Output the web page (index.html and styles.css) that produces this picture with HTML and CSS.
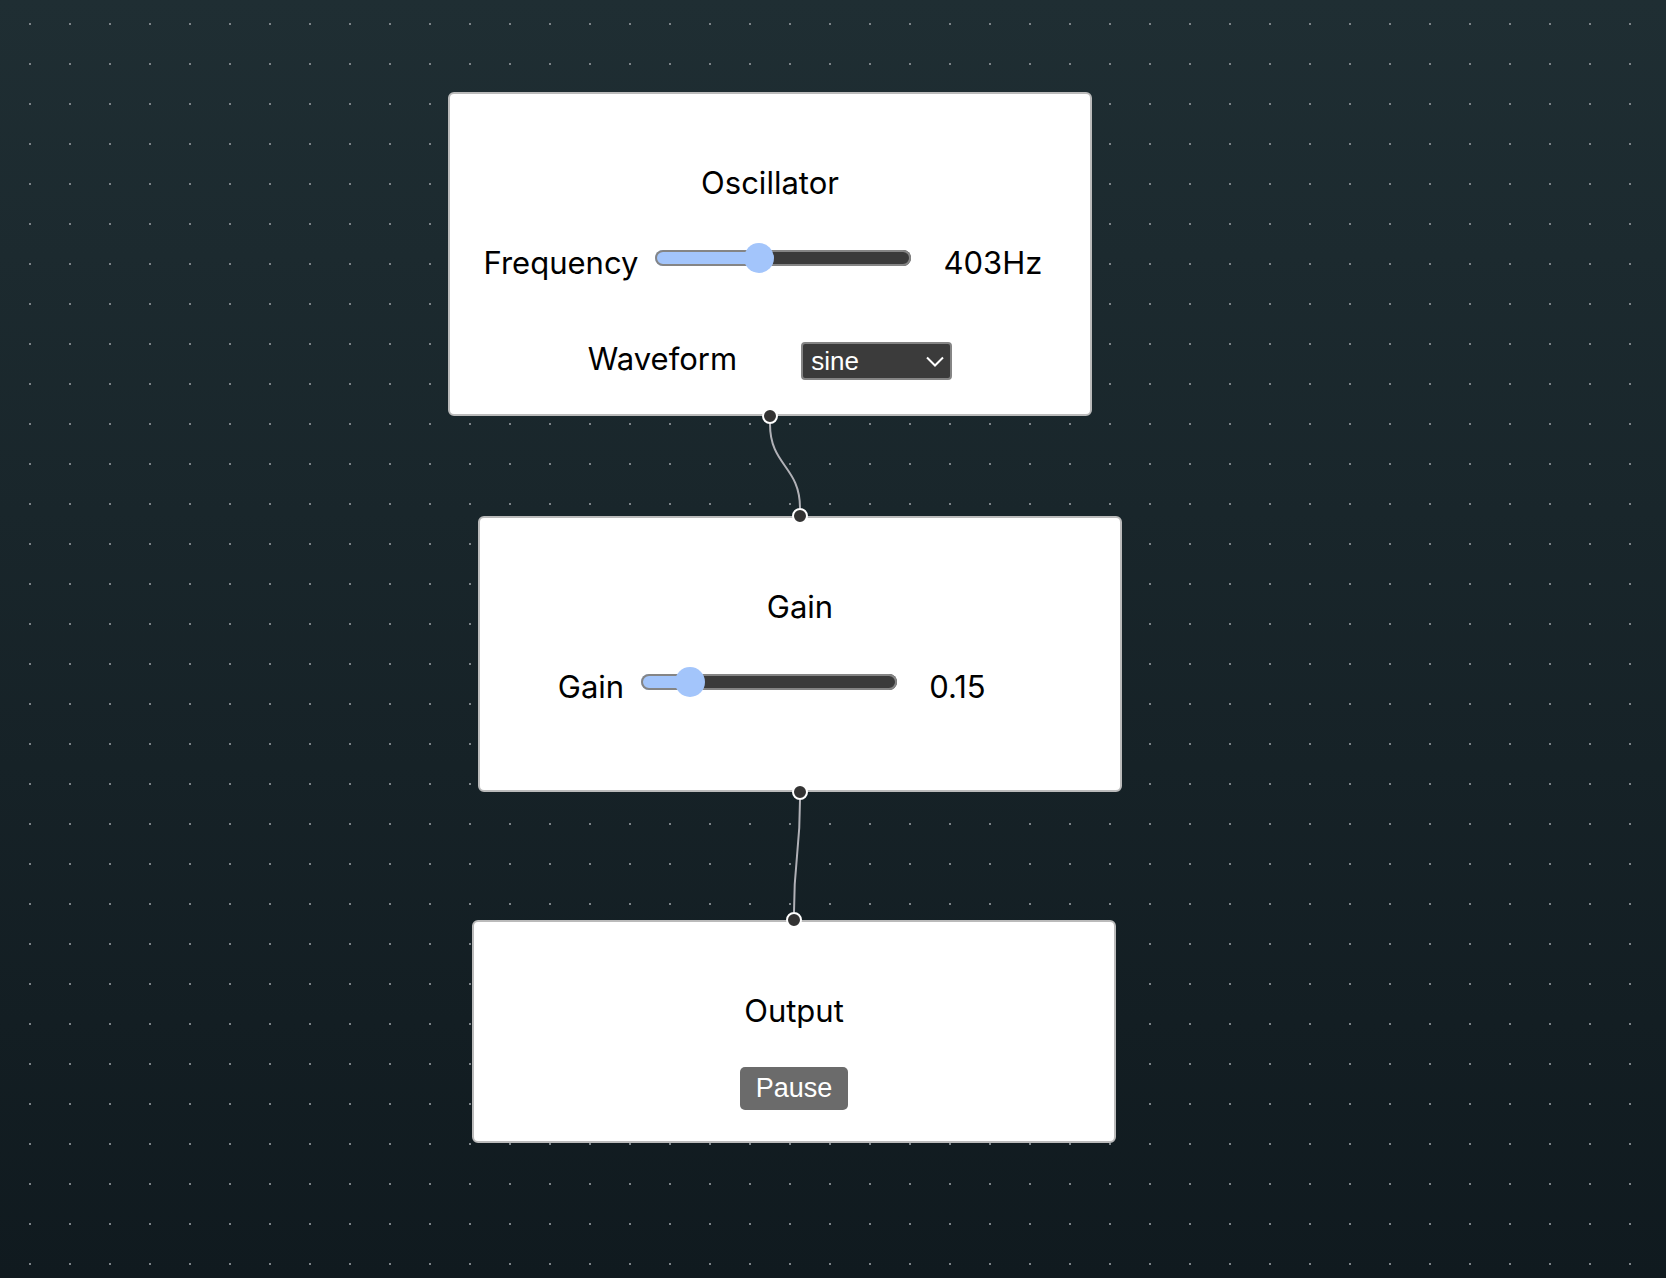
FILE: index.html
```html
<!DOCTYPE html>
<html lang="en">
<head>
<meta charset="utf-8">
<title>Audio graph</title>
<link rel="stylesheet" href="styles.css">
</head>
<body>
<main class="canvas">
  <svg class="edges" aria-hidden="true">
    <path d="M770 424C770 466 800 466 800 508"/>
    <path d="M800 800C800 856 794 856 794 912"/>
  </svg>

  <section class="node node-oscillator">
    <h2 class="title">Oscillator</h2>
    <div class="slider-row">
      <label for="frequency">Frequency</label>
      <input class="slider" id="frequency" type="range" min="10" max="1010" value="403" style="--fill: 39.3%">
      <output class="value" for="frequency">403Hz</output>
    </div>
    <div class="select-row">
      <label for="waveform">Waveform</label>
      <span class="select-box">
        <select class="select" id="waveform">
          <option>sine</option>
          <option>square</option>
          <option>sawtooth</option>
          <option>triangle</option>
        </select>
        <svg class="chevron" viewBox="0 0 18 12" aria-hidden="true"><path d="M1 1.500L9 9.500L17 1.500"/></svg>
      </span>
    </div>
    <span class="handle handle-bottom"></span>
  </section>

  <section class="node node-gain">
    <span class="handle handle-top"></span>
    <h2 class="title">Gain</h2>
    <div class="slider-row">
      <label for="gain">Gain</label>
      <input class="slider" id="gain" type="range" min="0" max="1" step="0.01" value="0.15" style="--fill: 15%">
      <output class="value" for="gain">0.15</output>
    </div>
    <span class="handle handle-bottom"></span>
  </section>

  <section class="node node-output">
    <span class="handle handle-top"></span>
    <h2 class="title">Output</h2>
    <button class="button" type="button">Pause</button>
  </section>
</main>
</body>
</html>
```
FILE: styles.css
```css
* {
  box-sizing: border-box;
}

body {
  margin: 0;
  color: #000;
  font: 400 31px/48px Inter, "Liberation Sans", sans-serif;
}

.canvas {
  position: relative;
  min-height: 100vh;
  overflow: hidden;
  background:
    conic-gradient(from 90deg at 38px 38px, #7c8388 90deg, transparent 0) -9px -15px / 40px 40px,
    linear-gradient(#1f2e33, #101a1f);
}

.edges {
  position: absolute;
  inset: 0;
  width: 100%;
  height: 100%;
  fill: none;
  stroke: #b1b1b7;
  stroke-width: 2;
}

.node {
  position: absolute;
  display: flex;
  flex-direction: column;
  align-items: center;
  width: 644px;
  padding: 65px 32px 31px;
  border: 2px solid #bbb;
  border-radius: 6px;
  background: #fff;
}

.node-oscillator {
  left: 448px;
  top: 92px;
}

.node-gain {
  left: 478px;
  top: 516px;
  padding-bottom: 79px;
}

.node-output {
  left: 472px;
  top: 920px;
}

.title {
  margin: 0 0 32px;
  font-size: inherit;
  font-weight: inherit;
}

.slider-row,
.select-row {
  display: flex;
  align-items: center;
}

.select-row {
  gap: 64px;
  margin-top: 48px;
}

.slider {
  appearance: none;
  width: 256px;
  height: 30px;
  margin: 0 32px 10px 17px;
  background: none;
}

.slider::-webkit-slider-runnable-track {
  height: 16px;
  border-radius: 8px;
  background: linear-gradient(to right, #a3c5fb var(--fill), #3b3b3b 0);
  box-shadow: inset 0 0 0 2px #858585;
}

.slider::-webkit-slider-thumb {
  appearance: none;
  width: 30px;
  height: 30px;
  margin-top: -7px;
  border-radius: 50%;
  background: #a3c5fb;
}

.value {
  width: 113px;
}

.select-box {
  position: relative;
  display: flex;
  margin-top: 4px;
}

.select {
  appearance: none;
  width: 151px;
  height: 38px;
  padding: 0 8px;
  border: 2px solid #858585;
  border-radius: 4px;
  background: #3b3b3b;
  color: #fff;
  font: 26px/32px "Liberation Sans", Arial, sans-serif;
}

.chevron {
  position: absolute;
  right: 8px;
  top: 14px;
  width: 18px;
  height: 12px;
  fill: none;
  stroke: #fff;
  stroke-width: 2;
  pointer-events: none;
}

.button {
  height: 43px;
  padding: 0 16px;
  border: 0;
  border-radius: 5px;
  background: #6b6b6b;
  color: #fff;
  font: 27px/43px "Liberation Sans", Arial, sans-serif;
}

.handle {
  position: absolute;
  left: calc(50% - 8px);
  width: 16px;
  height: 16px;
  border: 2px solid #fff;
  border-radius: 50%;
  background: #333;
}

.handle-top {
  top: -10px;
}

.handle-bottom {
  bottom: -10px;
}
```
